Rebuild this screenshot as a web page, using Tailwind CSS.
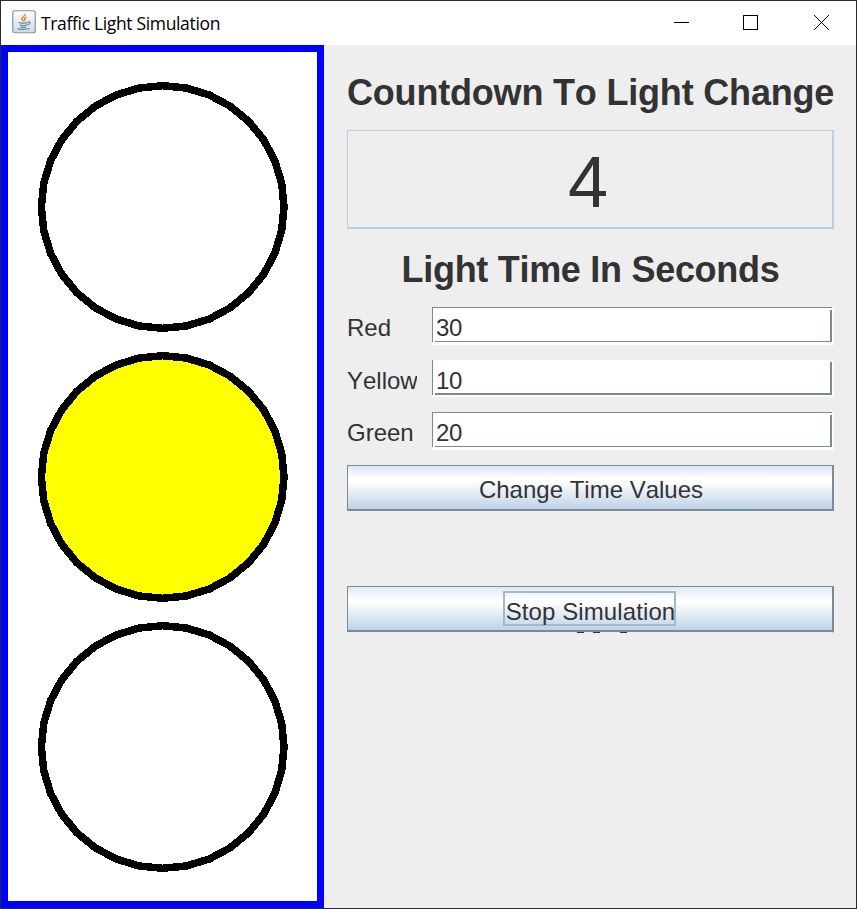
<!DOCTYPE html>
<html lang="en">
<head>
<meta charset="utf-8">
<title>Traffic Light Simulation</title>
<script src="https://cdn.jsdelivr.net/npm/@tailwindcss/browser@4"></script>
</head>
<body class="w-[857px] h-[909px] overflow-hidden">
<div class="w-[857px] h-[909px] border border-[#2b2b2d] bg-[#eeeeee] flex flex-col font-['Liberation_Sans',Arial,sans-serif] text-[#333333] [font-kerning:none]">
  <header class="h-11 shrink-0 bg-white flex items-center text-black [font-kerning:auto]">
    <svg class="ml-[11px] mb-0.5 shrink-0" width="24" height="24" viewBox="0 0 24 24" fill="none">
      <defs><linearGradient id="tile" x1="0" y1="0" x2="0" y2="1"><stop offset="0" stop-color="#fdfdfd"/><stop offset="1" stop-color="#d3dbe2"/></linearGradient></defs>
      <rect x=".75" y=".75" width="22.5" height="22" rx="2" fill="url(#tile)" stroke="#7f95a6" stroke-width="1.2"/>
      <path d="M12.800 4c1 2-3 3-3 5 0 1 1.300 1.500 1.300 2.500M14.500 7.200c-2 1-2.700 2-1.500 4" stroke="#e8822e" stroke-width="1.500"/>
      <path d="M7 12.200c-1 1 8 1.300 9 .2M7.800 14.700c1 1 5.700 1 7.200.2M8.500 16.700c1 .8 4.500 .8 5.500 .2M5.500 18.300c1 1.500 10 1.300 12 0M16 12c3-.5 2.500 2-.5 3" stroke="#5f88aa" stroke-width="1.200"/>
    </svg>
    <span class="ml-[5px] flex-1 whitespace-nowrap font-['Open_Sans',sans-serif] text-[17.5px] tracking-[-0.34px]">Traffic Light Simulation</span>
    <svg class="shrink-0" width="182" height="44" viewBox="674 1 182 44" fill="none" stroke="#000" shape-rendering="crispEdges">
      <path d="M674 22.500h15M743.500 15.500h14v14h-14z"/>
      <path d="M814 15l15 15M829 15l-15 15" shape-rendering="auto"/>
    </svg>
  </header>
  <main class="flex-1 min-h-0 flex">
    <section class="w-[323px] shrink-0 border-7 border-[#0000ff] bg-white">
      <svg width="309" height="849" viewBox="8 52 309 849" shape-rendering="crispEdges" stroke="#000" stroke-width="7.5" fill="#fff">
        <defs><polygon id="lamp"/></defs>
        <use href="#lamp" x="162.7" y="207"/>
        <use href="#lamp" x="162.7" y="477" fill="#ffff00"/>
        <use href="#lamp" x="162.7" y="747"/>
      </svg>
    </section>
    <section class="flex-1 min-w-0 flex flex-col pl-[23px] pr-[22px] pt-[26px]">
      <h1 class="h-[44px] leading-[44px] text-[36px] font-bold whitespace-nowrap tracking-[-0.19px]">Countdown To Light Change</h1>
      <div class="mt-[15px] h-[99px] shrink-0 border border-r-2 border-b-2 border-[#b8cfe5] text-center text-[72px] leading-[102px] pr-[4px]">4</div>
      <h1 class="mt-[19px] h-[44px] leading-[44px] text-center text-[36px] font-bold whitespace-nowrap tracking-[-0.29px]">Light Time In Seconds</h1>
      <div class="mt-[15px] grid grid-cols-[70px_402px] gap-x-[15px] grid-rows-[53px_52px_53px] text-[24px] leading-[41px] shrink-0">
        <span class="overflow-hidden">Red</span>
        <div class="grid h-[38px]">
          <svg class="col-start-1 row-start-1" width="402" height="38" shape-rendering="crispEdges"><path fill="#fff" d="M0 1h402v37H0z"/><path fill="#7a8a99" d="M0 0h400v1H1v34H0zM3 34h395V3h2v32H3z"/></svg>
          <span class="col-start-1 row-start-1 pl-[4px] tracking-[-0.3px]">30</span>
        </div>
        <span class="overflow-hidden">Yellow</span>
        <div class="grid h-[37px]">
          <svg class="col-start-1 row-start-1" width="402" height="37" shape-rendering="crispEdges"><path fill="#fff" d="M0 0h399v1h3v36H0z"/><path fill="#7a8a99" d="M0 0h1v35H0zM3 33h395V2h2v33H3z"/></svg>
          <span class="col-start-1 row-start-1 pl-[4px] tracking-[-0.3px]">10</span>
        </div>
        <span class="overflow-hidden">Green</span>
        <div class="grid h-[38px]">
          <svg class="col-start-1 row-start-1" width="402" height="38" shape-rendering="crispEdges"><path fill="#fff" d="M0 1h402v37H0z"/><path fill="#7a8a99" d="M0 0h400v1H1v34H0zM3 34h395V3h2v32H3z"/></svg>
          <span class="col-start-1 row-start-1 pl-[4px] tracking-[-0.3px]">20</span>
        </div>
      </div>
      <button class="h-[46px] shrink-0 border border-r-2 border-b-2 border-[#7a8a99] bg-[linear-gradient(#dde8f3_0%,#ffffff_30%,#ffffff_36%,#bdd2e6_100%)] text-[24px] leading-[48px] pl-[2px]">Change Time Values</button>
      <button class="mt-[75px] h-[46px] shrink-0 border border-r-2 border-b-2 border-[#7a8a99] bg-[linear-gradient(#dde8f3_0%,#ffffff_30%,#ffffff_36%,#bdd2e6_100%)] text-[24px] flex justify-center pt-1 pr-[2px]"><span class="w-[173px] h-[35px] border-2 border-[#a3b8cc] leading-[37px] whitespace-nowrap flex justify-center tracking-[0.1px] pl-[3px]">Stop Simulation</span></button>
      <svg width="487" height="2" viewBox="347 632 487 2" shape-rendering="crispEdges" fill="#333"><path d="M577 632h7v1h-7zM593 632h7v1h-7zM620 632h7v1h-7z"/><path fill="#c5d3e0" d="M347 632h1v1h-1zM832 632h2v1h-2z"/></svg>
    </section>
  </main>
</div>
<script>
  // Each lamp outline is a 32-sided ring.
  const pts = Array.from({length: 32}, (_, i) => {
    const a = i * Math.PI / 16;
    return (121.3 * Math.cos(a)).toFixed(2) + ',' + (121.3 * Math.sin(a)).toFixed(2);
  });
  document.getElementById('lamp').setAttribute('points', pts.join(' '));
</script>
</body>
</html>
